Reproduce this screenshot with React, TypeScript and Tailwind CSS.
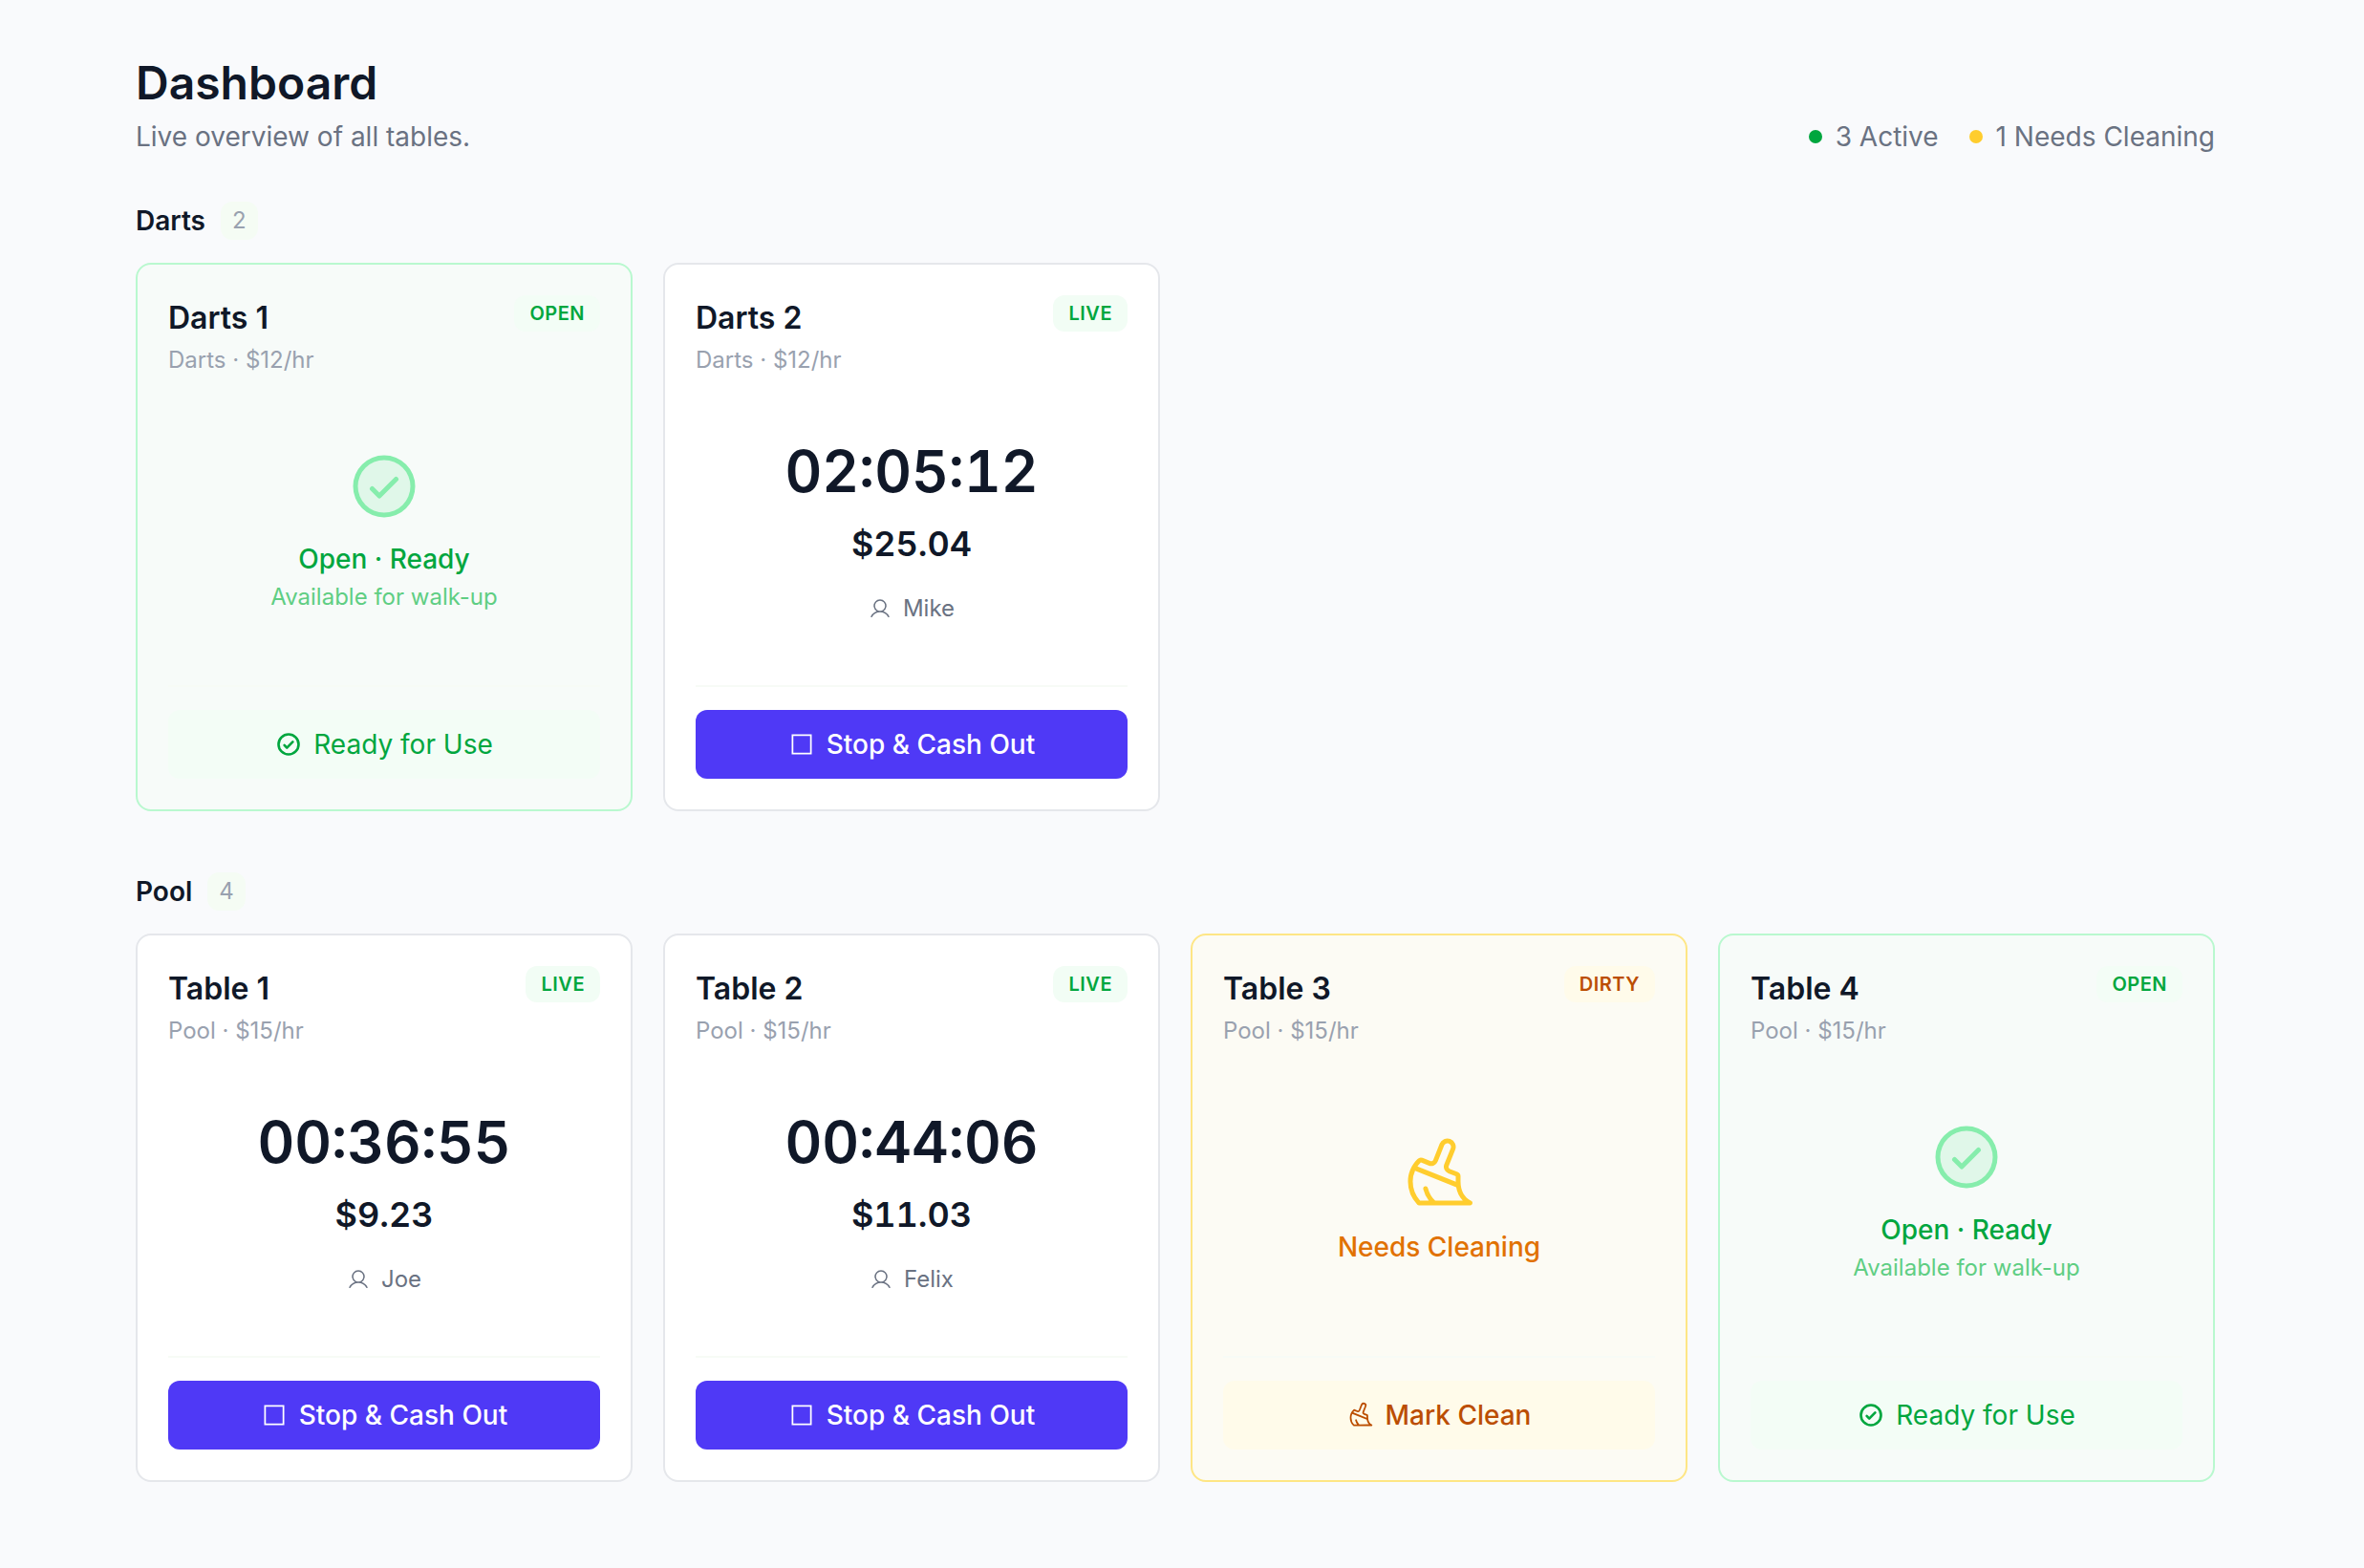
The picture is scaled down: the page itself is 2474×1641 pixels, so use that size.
import { PiBroom, PiCheckCircleBold, PiCheckCircleDuotone, PiUser } from "react-icons/pi";

type Table = {
    name: string
    game: string
    rate: number
    status: "live" | "open" | "dirty"
    time?: string
    total?: string
    player?: string
}

const darts: Table[] = [
    { name: "Darts 1", game: "Darts", rate: 12, status: "open" },
    { name: "Darts 2", game: "Darts", rate: 12, status: "live", time: "02:05:12", total: "$25.04", player: "Mike" },
]

const pool: Table[] = [
    { name: "Table 1", game: "Pool", rate: 15, status: "live", time: "00:36:55", total: "$9.23", player: "Joe" },
    { name: "Table 2", game: "Pool", rate: 15, status: "live", time: "00:44:06", total: "$11.03", player: "Felix" },
    { name: "Table 3", game: "Pool", rate: 15, status: "dirty" },
    { name: "Table 4", game: "Pool", rate: 15, status: "open" },
]

const cardStyle = {
    live: "border-gray-200 bg-white",
    open: "border-green-200 bg-[#f7fbf9]",
    dirty: "border-amber-200 bg-[#fcfbf4]",
}

const badgeStyle = {
    live: "bg-[#f2fdf5] text-green-600",
    open: "bg-[#f3fdf6] text-green-600",
    dirty: "bg-[#fffbea] text-amber-700",
}

const buttonStyle = {
    live: "bg-indigo-600 text-white font-medium",
    open: "bg-[#f3fdf6] text-green-600",
    dirty: "bg-[#fffbea] text-amber-700 font-medium",
}

function StopIcon(){
    return(
        <svg width={28} height={28} viewBox="0 0 256 256" fill="none" stroke="currentColor" strokeWidth={16} aria-hidden="true">
            <rect x="40" y="40" width="176" height="176" />
        </svg>
    )
}

function LiveBody({ table }: { table: Table }){
    return(
        <>
            <p className="text-[60px] leading-[72px] font-semibold tabular-nums text-gray-900">{table.time}</p>
            <p className="mt-4 text-4xl leading-[48px] font-semibold tabular-nums text-gray-900">{table.total}</p>
            <p className="mt-7 flex items-center gap-3 text-2xl leading-8 text-gray-500">
                <PiUser size={24} />
                {table.player}
            </p>
        </>
    )
}

function OpenBody(){
    return(
        <>
            <PiCheckCircleDuotone size={80} className="text-[#86edac]" />
            <p className="mt-4 text-[28px] leading-10 font-medium text-green-600">Open · Ready</p>
            <p className="mt-1 text-2xl leading-8 text-[#5fce83]">Available for walk-up</p>
        </>
    )
}

function DirtyBody(){
    return(
        <>
            <PiBroom size={80} className="text-[#ffcd2e]" />
            <p className="mt-4 text-[28px] leading-10 font-medium text-amber-600">Needs Cleaning</p>
        </>
    )
}

function TableCard({ table }: { table: Table }){
    return(
        <article className={`flex flex-col rounded-2xl border-2 p-8 ${cardStyle[table.status]}`}>
            <header className="flex items-start justify-between">
                <div>
                    <h3 className="text-[32px] leading-[48px] font-semibold text-gray-900">{table.name}</h3>
                    <p className="mt-1 text-2xl leading-8 text-gray-400">{table.game} · ${table.rate}/hr</p>
                </div>
                <span className={`rounded-xl px-4 py-1 text-xl leading-[30px] font-semibold tracking-wide uppercase ${badgeStyle[table.status]}`}>{table.status}</span>
            </header>
            <div className="flex flex-1 flex-col items-center justify-center py-16">
                {table.status === "live" && <LiveBody table={table} />}
                {table.status === "open" && <OpenBody />}
                {table.status === "dirty" && <DirtyBody />}
            </div>
            <footer className="border-t-2 border-[#f7fbf6] pt-6">
                <button type="button" className={`flex w-full items-center justify-center gap-3 rounded-xl py-4 text-[28px] leading-10 ${buttonStyle[table.status]}`}>
                    {table.status === "live" && <><StopIcon />Stop &amp; Cash Out</>}
                    {table.status === "open" && <><PiCheckCircleBold size={28} />Ready for Use</>}
                    {table.status === "dirty" && <><PiBroom size={28} />Mark Clean</>}
                </button>
            </footer>
        </article>
    )
}

function TableGroup({ title, tables }: { title: string, tables: Table[] }){
    return(
        <section>
            <div className="mb-6 flex items-center gap-4">
                <h2 className="text-[28px] leading-10 font-semibold text-gray-900">{title}</h2>
                <span className="rounded-xl bg-[#f5fcf4] px-3 py-1 text-2xl leading-8 text-gray-400">{tables.length}</span>
            </div>
            <div className="grid grid-cols-4 gap-8">
                {tables.map((table) => <TableCard key={table.name} table={table} />)}
            </div>
        </section>
    )
}

export default function App(){
    return(
        <main className="min-h-screen bg-[#f9fafc] pt-[55px] pr-[156px] pb-16 pl-[142px] font-['Inter',sans-serif]">
            <header className="mb-12 flex items-end justify-between">
                <div>
                    <h1 className="text-5xl leading-[64px] font-semibold text-gray-900">Dashboard</h1>
                    <p className="mt-1 text-[28px] leading-10 text-gray-500">Live overview of all tables.</p>
                </div>
                <div className="flex items-center gap-8 text-[28px] leading-10 text-gray-500">
                    <span className="flex items-center gap-3.5"><i className="size-[14px] rounded-full bg-green-600" />3 Active</span>
                    <span className="flex items-center gap-3.5"><i className="size-[14px] rounded-full bg-[#ffcd2e]" />1 Needs Cleaning</span>
                </div>
            </header>
            <div className="flex flex-col gap-16">
                <TableGroup title="Darts" tables={darts} />
                <TableGroup title="Pool" tables={pool} />
            </div>
        </main>
    )
}
